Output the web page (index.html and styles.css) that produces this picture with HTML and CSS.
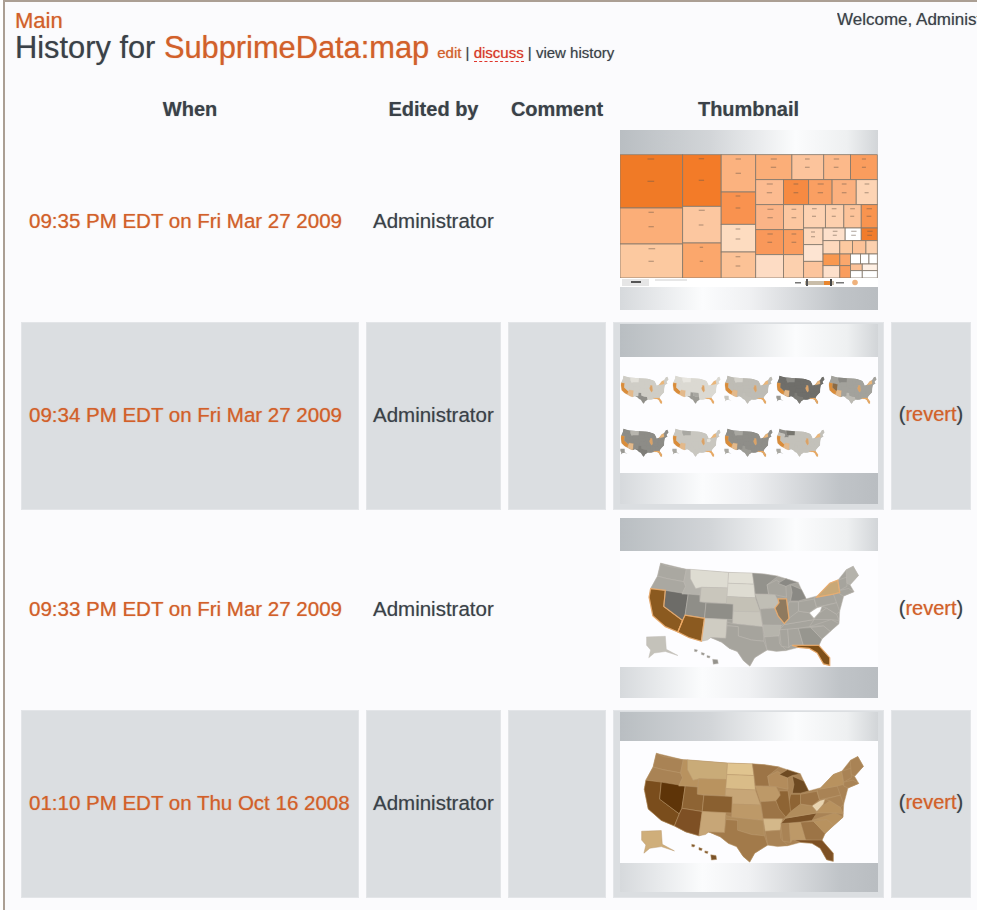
FILE: index.html
```html
<!DOCTYPE html>
<html lang="en">
<head>
    <title>History for SubprimeData:map</title>
    <meta charset="utf-8" />
    <link rel="stylesheet" href="styles.css">
</head>
<body>
<!-- shared map of the states, colours come from css variables -->
<svg class="defs" width="0" height="0">
    <symbol id="usa" viewBox="100 130 690 345" preserveAspectRatio="none">
        <polygon class="s-back" points="150,140 232,160 367,170 480,175 525,182 550,190 590,203 600,225 615,255 652,245 690,205 716,195 742,162 765,150 782,180 755,210 768,232 735,246 722,295 720,335 692,360 665,385 655,405 690,445 690,470 670,465 650,430 625,415 590,412 552,422 490,420 450,445 435,472 415,455 395,425 370,415 345,395 310,380 280,392 240,380 205,362 165,345 125,310 113,250 118,222 140,182"/>
        <polygon class="s-wa" points="150,140 172,150 232,160 224,200 170,190 140,182"/>
        <polygon class="s-or" points="140,182 170,190 224,200 230,215 218,240 118,222"/>
        <polygon class="s-ca" points="118,222 165,228 160,280 220,325 205,362 165,345 125,310 113,250"/>
        <polygon class="s-nv" points="165,228 238,240 228,308 220,325 160,280"/>
        <polygon class="s-id" points="232,160 245,160 245,190 262,222 280,218 275,243 238,240 218,240 230,215 224,200"/>
        <polygon class="s-mt" points="245,160 367,170 365,220 280,218 262,222 245,190"/>
        <polygon class="s-wy" points="280,218 365,220 360,270 275,265"/>
        <polygon class="s-ut" points="238,240 275,243 275,265 295,268 290,318 228,308"/>
        <polygon class="s-co" points="295,268 382,272 380,322 290,318"/>
        <polygon class="s-az" points="228,308 290,318 280,392 240,380 205,362 220,325"/>
        <polygon class="s-nm" points="290,318 362,322 358,382 310,380 300,388 280,392"/>
        <polygon class="s-nd" points="367,170 443,172 448,208 365,205"/>
        <polygon class="s-sd" points="365,205 448,208 452,252 362,248"/>
        <polygon class="s-ne" points="362,248 452,252 468,298 382,295 382,272 360,270"/>
        <polygon class="s-ks" points="382,295 468,298 476,345 380,335"/>
        <polygon class="s-ok" points="362,330 380,335 476,345 480,392 440,388 398,375 398,345 362,342"/>
        <polygon class="s-tx" points="362,342 398,345 398,375 440,388 480,392 490,420 450,445 435,472 415,455 395,425 370,415 345,395 310,380 358,382"/>
        <polygon class="s-mn" points="443,172 480,175 525,182 490,210 495,240 452,240 448,208"/>
        <polygon class="s-ia" points="452,240 515,242 528,268 515,285 468,288"/>
        <polygon class="s-wi" points="490,210 520,195 550,215 552,250 515,242 495,240"/>
        <polygon class="s-mo" points="468,288 515,285 545,335 535,342 476,340"/>
        <polygon class="s-ar" points="476,340 535,340 528,375 482,378"/>
        <polygon class="s-la" points="482,378 528,375 530,400 552,422 520,425 490,420"/>
        <polygon class="s-ms" points="530,355 556,352 560,412 535,408"/>
        <polygon class="s-al" points="556,352 590,350 606,405 565,405 560,412"/>
        <polygon class="s-ga" points="590,350 630,348 665,385 655,408 606,405"/>
        <polygon class="s-fl" points="570,405 655,405 690,445 690,470 670,465 650,430 625,415 590,412"/>
        <polygon class="s-sc" points="630,348 670,342 692,360 665,385"/>
        <polygon class="s-nc" points="625,345 695,322 720,335 692,360 670,342"/>
        <polygon class="s-tn" points="545,338 640,322 625,345 590,350 530,355"/>
        <polygon class="s-ky" points="545,320 590,295 625,300 640,322 545,338"/>
        <polygon class="s-va" points="640,322 652,305 680,285 712,305 720,325 695,322"/>
        <polygon class="s-wv" points="625,300 650,284 665,280 660,295 640,318"/>
        <polygon class="s-oh" points="590,265 640,256 648,282 625,300 590,295"/>
        <polygon class="s-in" points="560,265 590,265 590,295 560,318 548,318"/>
        <polygon class="s-il" points="525,255 552,255 560,318 545,335 525,310 515,285 528,268"/>
        <polygon class="s-mi" points="565,210 600,225 615,255 590,262 565,262 570,235"/>
        <polygon class="s-mu" points="525,205 550,190 590,203 565,208 550,215"/>
        <polygon class="s-pa" points="640,250 702,240 712,268 648,282"/>
        <polygon class="s-ny" points="652,245 690,205 716,195 722,235 702,240 648,250"/>
        <polygon class="s-md" points="665,280 712,268 722,295 712,305 680,285"/>
        <polygon class="s-nh" points="716,195 745,185 745,215 722,228"/>
        <polygon class="s-me" points="742,162 765,150 782,180 755,210 745,205"/>
        <polygon class="s-ma" points="722,228 750,222 768,232 735,246 722,240"/>
        <polygon class="s-ak" points="105,378 165,376 168,418 205,438 165,425 130,430 112,445 118,420 105,405"/>
        <polygon class="s-hi" points="258,418 268,420 265,426 258,425"/>
        <polygon class="s-hi" points="280,428 290,431 288,437 280,435"/>
        <polygon class="s-hi" points="298,438 308,440 306,446 298,444"/>
        <polygon class="s-hi" points="316,450 332,452 334,464 318,466"/>
        <!-- orange edge on the highlighted states -->
        <polygon class="glow" points="118,222 165,228 160,280 220,325 205,362 165,345 125,310 113,250"/>
        <polygon class="glow" points="228,308 290,318 280,392 240,380 205,362 220,325"/>
        <polygon class="glow" points="570,405 655,405 690,445 690,470 670,465 650,430 625,415 590,412"/>
        <polygon class="glow" points="525,255 552,255 560,318 545,335 525,310 515,285 528,268"/>
        <polygon class="glow" points="652,245 690,205 716,195 722,235 702,240 648,250"/>
    </symbol>
</svg>

<div class="page">
    <div class="top">
        <div class="title">
            <a href="#" class="crumb">Main</a>
            <div class="heading">
                <h1>History for <a href="#">SubprimeData:map</a></h1>
                <div class="actions">
                    <a href="#">edit</a> | <a href="#" class="missing">discuss</a> | view history
                </div>
            </div>
        </div>
        <div class="welcome">Welcome, Administrator</div>
    </div>

    <table class="history">
        <colgroup>
            <col class="c-when"><col class="c-who"><col class="c-note"><col class="c-thumb"><col class="c-act">
        </colgroup>
        <thead>
            <tr><th>When</th><th>Edited by</th><th>Comment</th><th>Thumbnail</th><th></th></tr>
        </thead>
        <tbody>
            <tr>
                <td class="when"><a href="#">09:35 PM EDT on Fri Mar 27 2009</a></td>
                <td class="who">Administrator</td>
                <td></td>
                <td class="pic">
                    <div class="thumb">
                        <div class="band band-top thin"></div>
                        <svg class="treemap" viewBox="30 88 770 372" preserveAspectRatio="none">
                            <rect x="30" y="90" width="187" height="160" fill="#f07a26"/>
                            <rect x="30" y="250" width="187" height="108" fill="#fbae78"/>
                            <rect x="30" y="358" width="187" height="102" fill="#fcc9a0"/>
                            <rect x="217" y="90" width="115" height="155" fill="#f37b28"/>
                            <rect x="217" y="245" width="115" height="110" fill="#fcc7a0"/>
                            <rect x="217" y="355" width="115" height="105" fill="#fba76c"/>
                            <rect x="332" y="90" width="103" height="112" fill="#fbb27f"/>
                            <rect x="332" y="202" width="103" height="97" fill="#f9924f"/>
                            <rect x="332" y="299" width="103" height="83" fill="#fddcc0"/>
                            <rect x="332" y="382" width="103" height="78" fill="#fcc296"/>
                            <rect x="435" y="90" width="108" height="75" fill="#fbae78"/>
                            <rect x="543" y="90" width="95" height="75" fill="#fcc49c"/>
                            <rect x="638" y="90" width="80" height="75" fill="#fcb98a"/>
                            <rect x="718" y="90" width="80" height="75" fill="#fa9d5e"/>
                            <rect x="435" y="165" width="83" height="75" fill="#fcbb90"/>
                            <rect x="518" y="165" width="75" height="75" fill="#f68a42"/>
                            <rect x="593" y="165" width="70" height="75" fill="#fa9f62"/>
                            <rect x="663" y="165" width="72" height="75" fill="#fbb07e"/>
                            <rect x="735" y="165" width="63" height="75" fill="#fdd4b4"/>
                            <rect x="435" y="240" width="83" height="75" fill="#fbb487"/>
                            <rect x="518" y="240" width="60" height="75" fill="#fcc7a0"/>
                            <rect x="578" y="240" width="65" height="70" fill="#fdd2b2"/>
                            <rect x="643" y="240" width="55" height="70" fill="#fdd0ae"/>
                            <rect x="698" y="240" width="52" height="70" fill="#fcc39a"/>
                            <rect x="750" y="240" width="48" height="70" fill="#f9944f"/>
                            <rect x="435" y="315" width="83" height="75" fill="#f9985a"/>
                            <rect x="518" y="315" width="60" height="75" fill="#fa9c5e"/>
                            <rect x="578" y="310" width="58" height="50" fill="#fdd8bc"/>
                            <rect x="636" y="310" width="66" height="38" fill="#fde0cb"/>
                            <rect x="702" y="310" width="48" height="38" fill="#ffffff"/>
                            <rect x="750" y="310" width="48" height="38" fill="#f17c2b"/>
                            <rect x="435" y="390" width="83" height="70" fill="#fddcc4"/>
                            <rect x="518" y="390" width="60" height="70" fill="#fcd0ae"/>
                            <rect x="578" y="360" width="58" height="50" fill="#fde4d2"/>
                            <rect x="578" y="410" width="58" height="50" fill="#fcc49c"/>
                            <rect x="636" y="348" width="50" height="40" fill="#fdd8bc"/>
                            <rect x="686" y="348" width="38" height="40" fill="#fcc9a0"/>
                            <rect x="724" y="348" width="40" height="40" fill="#fcc298"/>
                            <rect x="764" y="348" width="34" height="40" fill="#fcd0ae"/>
                            <rect x="636" y="388" width="50" height="35" fill="#f9984f"/>
                            <rect x="686" y="388" width="32" height="35" fill="#fba76c"/>
                            <rect x="718" y="388" width="30" height="30" fill="#ffffff"/>
                            <rect x="748" y="388" width="25" height="30" fill="#ffffff"/>
                            <rect x="773" y="388" width="25" height="30" fill="#ffffff"/>
                            <rect x="636" y="423" width="50" height="37" fill="#fde0cb"/>
                            <rect x="686" y="423" width="32" height="37" fill="#fa9d5e"/>
                            <rect x="718" y="418" width="35" height="20" fill="#fcc298"/>
                            <rect x="753" y="418" width="45" height="20" fill="#fff0e4"/>
                            <rect x="718" y="438" width="35" height="22" fill="#ffffff"/>
                            <rect x="753" y="438" width="45" height="22" fill="#ffffff"/>
                            <!-- tiny cell labels, unreadable at this size -->
                            <path class="marks" d="M112 103h20M112 170h20M115 263h16M115 306h16M115 372h20M115 410h16M265 102h16M265 167h16M265 257h18M265 301h14M268 368h10M268 410h10M375 103h16M375 146h16M375 214h14M375 250h14M375 313h14M375 343h14M375 396h14M375 424h14M480 103h18M480 128h16M582 103h14M582 128h14M668 103h16M668 128h14M752 103h12M752 128h12M468 178h18M468 204h16M548 178h14M548 204h14M620 178h18M620 204h16M692 178h14M692 204h14M760 178h14M760 204h12M470 254h18M470 279h16M542 254h14M542 279h14M603 252h14M603 275h12M662 252h14M662 275h12M717 252h14M717 275h12M766 252h16M766 275h14M470 328h16M470 353h14M542 328h14M542 353h14M600 322h12M600 336h12M665 320h14M665 332h12M720 320h16M720 332h14M768 320h16M768 332h14"/>
                        </svg>
                        <svg class="controls" width="258" height="9" viewBox="0 0 258 9">
                            <rect x="2" y="1" width="27" height="7" fill="#e6e6e6"/>
                            <rect x="11" y="3" width="10" height="2" fill="#555"/>
                            <rect x="35" y="1.5" width="32" height="1" fill="#cfcfcf"/>
                            <rect x="175" y="4" width="6" height="1.5" fill="#777"/>
                            <rect x="185" y="3" width="29" height="4" fill="#c9bda9"/>
                            <rect x="186" y="1" width="2" height="7" fill="#555"/>
                            <rect x="204" y="3" width="6" height="4" fill="#e8862e"/>
                            <rect x="210" y="1" width="2" height="7" fill="#444"/>
                            <rect x="216" y="4" width="8" height="1.5" fill="#777"/>
                            <circle cx="235" cy="4.5" r="2.8" fill="#efb27c"/>
                        </svg>
                        <div class="band band-bot thin"></div>
                    </div>
                </td>
                <td></td>
            </tr>
            <tr class="alt">
                <td class="when"><a href="#">09:34 PM EDT on Fri Mar 27 2009</a></td>
                <td class="who">Administrator</td>
                <td></td>
                <td class="pic">
                    <div class="thumb">
                        <div class="band band-top"></div>
                        <div class="small-maps">
                            <svg class="mini m1"><use href="#usa"/></svg>
                            <svg class="mini m2"><use href="#usa"/></svg>
                            <svg class="mini m3"><use href="#usa"/></svg>
                            <svg class="mini m4"><use href="#usa"/></svg>
                            <svg class="mini m5"><use href="#usa"/></svg>
                            <svg class="mini m6"><use href="#usa"/></svg>
                            <svg class="mini m7"><use href="#usa"/></svg>
                            <svg class="mini m8"><use href="#usa"/></svg>
                            <svg class="mini m9"><use href="#usa"/></svg>
                        </div>
                        <div class="band band-bot"></div>
                    </div>
                </td>
                <td class="act">(<a href="#">revert</a>)</td>
            </tr>
            <tr>
                <td class="when"><a href="#">09:33 PM EDT on Fri Mar 27 2009</a></td>
                <td class="who">Administrator</td>
                <td></td>
                <td class="pic">
                    <div class="thumb">
                        <div class="band band-top"></div>
                        <div class="big-map gray-pic">
                            <svg class="big gray"><use href="#usa"/></svg>
                        </div>
                        <div class="band band-bot"></div>
                    </div>
                </td>
                <td class="act">(<a href="#">revert</a>)</td>
            </tr>
            <tr class="alt">
                <td class="when"><a href="#">01:10 PM EDT on Thu Oct 16 2008</a></td>
                <td class="who">Administrator</td>
                <td></td>
                <td class="pic">
                    <div class="thumb">
                        <div class="band band-top short"></div>
                        <div class="big-map brown-pic">
                            <svg class="big brown"><use href="#usa"/></svg>
                        </div>
                        <div class="band band-bot short"></div>
                    </div>
                </td>
                <td class="act">(<a href="#">revert</a>)</td>
            </tr>
        </tbody>
    </table>
</div>
</body>
</html>
```

FILE: styles.css
```css
/*page*/
html{background:#fff}
body{
    margin:0;
    font-family:"Liberation Sans",Arial,sans-serif;
    color:#3a4148;
    text-shadow:0 0 1px rgba(58,65,72,.45);
}
a{color:#d2602a;text-decoration:none;text-shadow:0 0 1px rgba(210,96,42,.6)}
.defs{display:block;height:0}
.page{
    width:972px;
    height:908px;
    margin-left:3px;
    border-top:2px solid #ab9f94;
    border-left:2px solid #ab9f94;
    background:#fbfbfd;
    overflow:hidden;
}

/*header*/
.top{display:flex;justify-content:space-between;align-items:flex-start;height:88px}
.title{padding:9px 0 0 10px}
.crumb{display:block;font-size:22px;line-height:20px}
.heading{display:flex;align-items:baseline;gap:8px}
h1{margin:0;font-size:30.8px;font-weight:normal;line-height:34px}
.actions{font-size:15px}
.actions .missing{color:#d8342a;border-bottom:1px dashed #e0352b}
.welcome{
    flex:0 0 140px;
    margin-top:8px;
    font-size:17px;
    white-space:nowrap;
    overflow:hidden;
}

/*table*/
.history{
    table-layout:fixed;
    width:964px;
    margin-left:9px;
    border-collapse:separate;
    border-spacing:7px 6px;
    font-size:20.5px;
}
.c-when{width:338px}
.c-who{width:135px}
.c-note{width:98px}
.c-thumb{width:271px}
.c-act{width:80px}
th{height:26px;padding:0;font-size:20px;text-align:center}
td{box-sizing:border-box;height:188px;padding:0 0 3px;vertical-align:middle}
.alt td{background:#dbdee1;box-shadow:inset 0 0 0 1px #e3e5e8}
.when{padding-left:8px;white-space:nowrap}
.who{padding-left:7px}
.act{text-align:center;font-size:20px}
td.pic{vertical-align:top;padding:2px 0 0}

/*thumbnails*/
.thumb{display:flex;flex-direction:column;width:258px;height:180px;margin-left:7px;filter:blur(.6px)}
.band{height:33px;flex:none}
.band-bot{height:31px}
.band.thin{height:24px}
.band-bot.thin{height:23px}
.band.short{height:29px}
.band-top{background:linear-gradient(90deg,#b9bec2,#d2d5d8 35%,#fbfcfd 68%,#eef0f1 88%,#d2d5d8)}
.band-bot{background:linear-gradient(90deg,#d6d9dc,#fbfcfd 32%,#f0f1f3 50%,#c0c4c8 85%,#b9bdc1)}
.treemap{display:block;width:258px;height:124px;flex:none;background:#fff}
.treemap rect{stroke:#85796c;stroke-width:2.5}
.marks{fill:none;stroke:#6b5a48;stroke-width:3;opacity:.55}
.controls{display:block;flex:none;background:#fff}
.controls rect{stroke:none}

.small-maps{
    flex:1;
    display:flex;
    flex-wrap:wrap;
    align-content:flex-start;
    gap:24px 3px;
    padding:18px 0 0 0;
    background:#fdfdff;
}
.mini{display:block;width:49px;height:29px;filter:blur(.5px)}
.big-map{flex:1;padding:9px 0 0 20px;background:#fdfdff}
.big{display:block;width:226px;height:113px}
.gray-pic{padding-left:25px}
.gray-pic .big{width:216px;height:107px}

/*map states*/
symbol polygon{stroke:var(--line);stroke-width:1.5}
.s-back{fill:var(--base)}
.glow{fill:none;stroke:var(--hot,transparent);stroke-width:4;opacity:.75}
.s-wa{fill:var(--wa,var(--base))}
.s-or{fill:var(--or,var(--base))}
.s-ca{fill:var(--ca,var(--base))}
.s-nv{fill:var(--nv,var(--base))}
.s-id{fill:var(--id,var(--base))}
.s-mt{fill:var(--mt,var(--base))}
.s-wy{fill:var(--wy,var(--base))}
.s-ut{fill:var(--ut,var(--base))}
.s-co{fill:var(--co,var(--base))}
.s-az{fill:var(--az,var(--base))}
.s-nm{fill:var(--nm,var(--base))}
.s-nd{fill:var(--nd,var(--base))}
.s-sd{fill:var(--sd,var(--base))}
.s-ne{fill:var(--ne,var(--base))}
.s-ks{fill:var(--ks,var(--base))}
.s-ok{fill:var(--ok,var(--base))}
.s-tx{fill:var(--tx,var(--base))}
.s-mn{fill:var(--mn,var(--base))}
.s-ia{fill:var(--ia,var(--base))}
.s-wi{fill:var(--wi,var(--base))}
.s-mo{fill:var(--mo,var(--base))}
.s-ar{fill:var(--ar,var(--base))}
.s-la{fill:var(--la,var(--base))}
.s-ms{fill:var(--ms,var(--base))}
.s-al{fill:var(--al,var(--base))}
.s-ga{fill:var(--ga,var(--base))}
.s-fl{fill:var(--fl,var(--base))}
.s-sc{fill:var(--sc,var(--base))}
.s-nc{fill:var(--nc,var(--base))}
.s-tn{fill:var(--tn,var(--base))}
.s-ky{fill:var(--ky,var(--base))}
.s-va{fill:var(--va,var(--base))}
.s-wv{fill:var(--wv,var(--base))}
.s-oh{fill:var(--oh,var(--base))}
.s-in{fill:var(--in,var(--base))}
.s-il{fill:var(--il,var(--base))}
.s-mi{fill:var(--mi,var(--base))}
.s-mu{fill:var(--mi,var(--base))}
.s-pa{fill:var(--pa,var(--base))}
.s-ny{fill:var(--ny,var(--base))}
.s-md{fill:var(--md,var(--base))}
.s-nh{fill:var(--nh,var(--base))}
.s-me{fill:var(--me,var(--base))}
.s-ma{fill:var(--ma,var(--base))}
.s-ak{fill:var(--ak,var(--base))}
.s-hi{fill:var(--hi,var(--base))}

.gray{
    --base:#a6a49d;--line:#c0bdb6;--hot:#f5ab62;
    --mt:#dedcd2;--nd:#e2e0d6;--sd:#dedcd2;--wy:#c9c6bc;--ne:#c4c1b6;--ks:#c9c6bc;--nm:#cfccc2;
    --id:#b4b2ab;--wa:#aaa8a1;--or:#aaa8a1;--co:#8f8e88;--ut:#8f8e88;--mn:#93928c;
    --ia:#c0beb5;--mi:#8a8984;--ar:#b6b4ac;--ga:#97968f;--me:#b4b2ab;--wv:#ffffff;
    --nv:#6d6c68;--ca:#8b5a20;--az:#8b5a20;--fl:#7f5018;--il:#8f7a5f;--ny:#c9a877;
    --ak:#c4c2ba;--hi:#94928c;
}
.brown{
    --base:#a98355;--line:#bb9a6f;
    --nv:#5e3408;--ca:#7a4d1c;--az:#7e5024;--fl:#7d5024;--mt:#c9ab78;--nd:#e0c48f;--sd:#d9bc88;
    --id:#b8925f;--wy:#b9935f;--ut:#8e6434;--co:#8a6030;--nm:#c7a677;--ks:#bd9968;--ne:#c7a677;
    --ok:#b08c5c;--tx:#a27a4a;--mn:#9c7446;--ia:#bd9968;--wi:#b38c5c;--mi:#6e4a22;--il:#8e6434;
    --in:#8e6434;--oh:#9c7446;--mo:#9c7446;--ar:#d4b88a;--al:#bd9968;--ga:#9c7446;--sc:#b8925f;
    --nc:#b8925f;--tn:#7a5228;--ky:#b08c5c;--va:#b8925f;--wv:#e8d4b0;--ny:#b8925f;
    --ak:#cfae7a;--hi:#7a5228;
}
.mini{--line:transparent;--hot:#efae6c;--ak:#fdfdff;--hi:#fdfdff;--ca:#d98c3a;--az:#e3b98b;--fl:#e9a860;--ny:#eab77a;--il:#d9a268}
.m1{--base:#cfcdc6;--mt:#e2e0d9;--tx:#8f8e89;--or:#cfcdc6}
.m2{--base:#dbd9d2;--mt:#e8e6e0;--tx:#9b9a94;--ok:#a8a7a1}
.m3{--base:#bebcb5;--mt:#d4d2cb;--tx:#c0beb7;--ak:#c8c6bf}
.m4{--base:#6f6e6a;--tx:#7b7a75;--ak:#9a9994;--mt:#8b8a85}
.m5{--base:#a3a29c;--nv:#8b6a44;--mt:#8b8a85;--tx:#bcbab3}
.m6{--base:#8d8c87;--mt:#b7b5ae;--tx:#7e7d78;--ak:#9a9994}
.m7{--base:#c9c7c0;--mt:#a9a8a2;--oh:#e4e2db;--ak:#a9a8a2}
.m8{--base:#8f8e89;--mt:#a9a8a2;--tx:#9c9b95;--ak:#a9a8a2}
.m9{--base:#c3c1ba;--mt:#77766f;--wa:#8d8c87;--id:#8d8c87;--ak:#a9a8a2}
```
